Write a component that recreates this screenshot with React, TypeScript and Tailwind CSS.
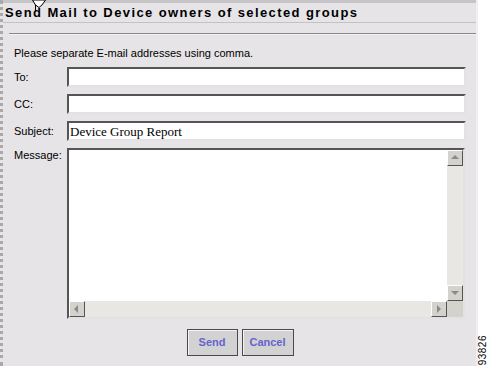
import React from 'react';

const sans = { fontFamily: '"Liberation Sans", Arial, sans-serif' };

function Field({ label, value }: { label: string; value?: string }) {
  return (
    <div className="flex items-center h-[20px]">
      <span className="w-[53px] text-[11px] text-black leading-none">{label}</span>
      <div className="w-[399px] h-[20px] bg-white border-2 border-t-[#555] border-l-[#555] border-r-[#e2e2e2] border-b-[#e2e2e2] flex items-center pl-[1px]">
        {value && (
          <span className="text-[13px] text-black leading-none" style={{ fontFamily: '"Liberation Serif", "Times New Roman", serif' }}>
            {value}
          </span>
        )}
      </div>
    </div>
  );
}

function ScrollButton({ dir }: { dir: 'up' | 'down' | 'left' | 'right' }) {
  const points = {
    up: '4,9 8,5 12,9',
    down: '4,6 8,10 12,6',
    left: '9,4 5,8 9,12',
    right: '6,4 10,8 6,12',
  }[dir];
  return (
    <div className="w-[16px] h-[16px] bg-[#d4d2cc] border border-t-white border-l-white border-r-[#555] border-b-[#555] flex items-center justify-center">
      <svg width="14" height="14" viewBox="1 1 14 14">
        <polygon points={points} fill="#8a8a8a" />
      </svg>
    </div>
  );
}

export default function App() {
  return (
    <div className="relative w-[488px] h-[366px] bg-white flex overflow-hidden" style={sans}>
      <div className="w-[476px] h-full bg-[#e6e4e6] border-l-[3px] border-dotted border-[#a9a9a9] flex flex-col">
        <div className="h-[3px] bg-[#c6c4c6]" />
        <div className="h-[20px] pl-[2px] border-b border-[#c4c2c4] flex items-center">
          <span className="text-[13px] font-bold text-black tracking-[1.4px] leading-none">
            Send Mail to Device owners of selected groups
          </span>
        </div>
        <div className="mt-[10px] ml-[6px] border-t border-[#8a888a] border-b border-b-[#f2f2f2]" />
        <div className="pl-[11px] pt-[13px] flex flex-col">
          <p className="text-[11px] text-black leading-none">Please separate E-mail addresses using comma.</p>
          <div className="mt-[8px] flex flex-col gap-[7px]">
            <Field label="To:" />
            <Field label="CC:" />
            <Field label="Subject:" value="Device Group Report" />
            <div className="flex items-start">
              <span className="w-[53px] pt-[2px] text-[11px] text-black leading-none">Message:</span>
              <div className="w-[398px] h-[171px] border-2 border-t-[#555] border-l-[#555] border-r-[#e2e2e2] border-b-[#e2e2e2] flex flex-col">
                <div className="flex-1 flex">
                  <div className="flex-1 bg-white" />
                  <div className="w-[16px] flex flex-col bg-[#e8e7e3]">
                    <ScrollButton dir="up" />
                    <div className="flex-1" />
                    <ScrollButton dir="down" />
                  </div>
                </div>
                <div className="h-[16px] flex bg-[#e8e7e3]">
                  <ScrollButton dir="left" />
                  <div className="flex-1" />
                  <ScrollButton dir="right" />
                  <div className="w-[16px] h-[16px] bg-[#d4d2cc]" />
                </div>
              </div>
            </div>
          </div>
          <div className="mt-[10px] flex justify-center gap-[4px] pr-[10px]">
            <button className="w-[51px] h-[27px] bg-[#d2d2d2] border border-[#4a4a4a] shadow-[inset_1px_1px_0_#f4f4f4] text-[11px] font-bold text-[#6464cc]">
              Send
            </button>
            <button className="w-[52px] h-[27px] bg-[#d2d2d2] border border-[#4a4a4a] shadow-[inset_1px_1px_0_#f4f4f4] text-[11px] font-bold text-[#6464cc]">
              Cancel
            </button>
          </div>
        </div>
      </div>
      <div className="flex-1 border-l-2 border-[#efefef] flex flex-col justify-end items-center pb-[1px]">
        <span className="text-[10px] text-black leading-none tracking-[0.5px] [writing-mode:vertical-rl] rotate-180">93826</span>
      </div>
      <svg className="absolute left-[32px] top-0" width="14" height="12" viewBox="0 0 14 12">
        <polygon points="0.5,0 13.5,0 10,5 7,7.5 3.5,5" fill="white" stroke="black" strokeWidth="1" />
        <line x1="3.5" y1="5" x2="3.5" y2="11" stroke="black" strokeWidth="1" />
      </svg>
    </div>
  );
}
